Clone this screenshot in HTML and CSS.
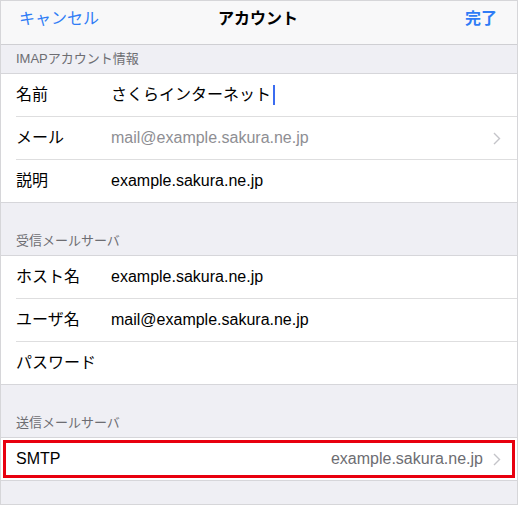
FILE: index.html
```html
<!doctype html>
<html lang="ja">
    <head>
        <meta charset="UTF-8" />
        <meta name="viewport" content="width=device-width, initial-scale=1.0" />
        <title>アカウント</title>
        <link rel="stylesheet" href="styles.css">
    </head>
    <body>
        <div class="screen">
            <div class="navbar">
                <span class="nav-button">キャンセル</span>
                <span class="nav-title">アカウント</span>
                <span class="nav-button done">完了</span>
            </div>

            <div class="group-header first">IMAPアカウント情報</div>
            <ul class="group">
                <li class="row">
                    <span class="label">名前</span>
                    <span class="value">さくらインターネット<span class="cursor"></span></span>
                </li>
                <li class="row">
                    <span class="label">メール</span>
                    <span class="value muted">mail@example.sakura.ne.jp</span>
                    <svg class="chevron" width="8" height="13" viewBox="0 0 8 13"><polyline points="1,1 6.5,6.5 1,12" /></svg>
                </li>
                <li class="row">
                    <span class="label">説明</span>
                    <span class="value">example.sakura.ne.jp</span>
                </li>
            </ul>

            <div class="group-header">受信メールサーバ</div>
            <ul class="group">
                <li class="row">
                    <span class="label">ホスト名</span>
                    <span class="value">example.sakura.ne.jp</span>
                </li>
                <li class="row">
                    <span class="label">ユーザ名</span>
                    <span class="value">mail@example.sakura.ne.jp</span>
                </li>
                <li class="row">
                    <span class="label">パスワード</span>
                    <span class="value"></span>
                </li>
            </ul>

            <div class="group-header">送信メールサーバ</div>
            <ul class="group">
                <li class="row highlight">
                    <span class="label">SMTP</span>
                    <span class="value detail">example.sakura.ne.jp</span>
                    <svg class="chevron" width="8" height="13" viewBox="0 0 8 13"><polyline points="1,1 6.5,6.5 1,12" /></svg>
                </li>
            </ul>
        </div>
    </body>
</html>
```

FILE: styles.css
```css
body {
    margin: 0;
    padding: 0;
    font-family: "Liberation Sans", "Noto Sans CJK JP", sans-serif;
    background-color: #fff;
}
.screen {
    width: 518px;
    height: 505px;
    box-sizing: border-box;
    border: 1px solid #d6d6d9;
    background-color: #efeff4;
    overflow: hidden;
}
.navbar {
    height: 36px;
    padding: 0 20px 7px 18px;
    display: flex;
    justify-content: space-between;
    align-items: center;
    background-color: #f8f8f9;
    border-bottom: 1px solid #cfcfd3;
    font-size: 16px;
    line-height: 20px;
}
.nav-button {
    color: #2f7cf6;
    width: 80px;
}
.nav-button.done {
    text-align: right;
    font-weight: bold;
}
.nav-title {
    font-weight: bold;
    color: #000;
}
.group-header {
    height: 52px;
    box-sizing: border-box;
    padding: 0 15px 6px;
    display: flex;
    align-items: flex-end;
    font-size: 13px;
    line-height: 16px;
    color: #6d6d72;
}
.group-header.first {
    height: 28px;
    padding-bottom: 0;
    align-items: center;
}
.group {
    list-style-type: none;
    margin: 0;
    padding: 0;
    background: #fff;
    border-top: 1px solid #d6d6da;
    border-bottom: 1px solid #d6d6da;
}
.row {
    height: 42px;
    margin-left: 15px;
    padding-right: 16px;
    display: flex;
    align-items: center;
    font-size: 16px;
    line-height: 20px;
    color: #000;
    border-bottom: 1px solid #dededf;
}
.row:last-child {
    border-bottom: none;
}
.label {
    width: 95px;
    flex-shrink: 0;
}
.value {
    flex: 1;
    display: flex;
    align-items: center;
}
.value.muted {
    color: #8e8e93;
}
.value.detail {
    justify-content: flex-end;
    color: #6d6d72;
    margin-right: 10px;
}
.cursor {
    display: inline-block;
    width: 2px;
    height: 20px;
    margin-left: 2px;
    background: #3b6cf0;
}
.chevron {
    flex-shrink: 0;
}
.chevron polyline {
    fill: none;
    stroke: #c4c4c9;
    stroke-width: 1.4;
}
.highlight {
    margin-left: 0;
    padding-left: 15px;
    outline: 3px solid #e8000f;
    outline-offset: -5px;
}
```
